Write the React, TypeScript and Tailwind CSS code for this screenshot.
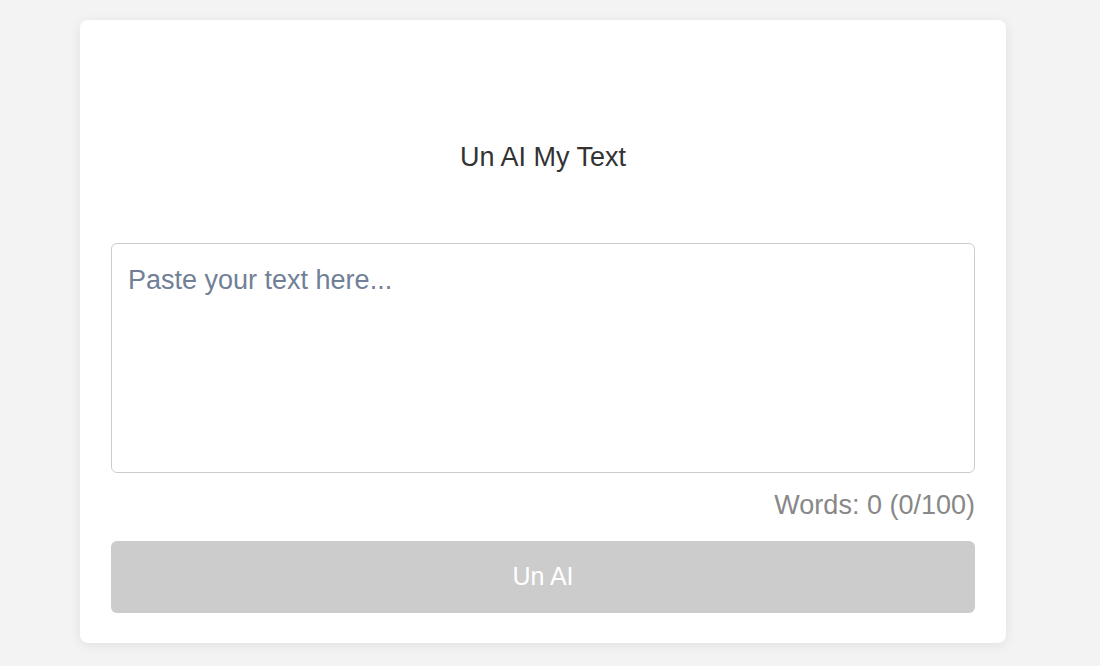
import React, { useState } from 'react';

const App: React.FC = () => {
  const [text, setText] = useState('');
  const words = text.trim() ? text.trim().split(/\s+/).length : 0;

  return (
    <div className="min-h-[666px] w-full bg-[#f3f3f3] pt-[20px] font-['Liberation_Sans',Arial,sans-serif]">
      <div className="ml-[80px] w-[926px] rounded-[8px] bg-white px-[31px] pt-[30px] pb-[30px] shadow-[0_2px_12px_rgba(0,0,0,0.08)]">
        <h1 className="mt-[92px] mb-[71px] text-center text-[27px] leading-[30px] font-normal text-[#333333]">
          Un AI My Text
        </h1>
        <textarea
          value={text}
          onChange={(e) => setText(e.target.value)}
          placeholder="Paste your text here..."
          className="block h-[230px] w-full resize-none rounded-[6px] border border-[#cccccc] px-[16px] pt-[21px] text-[27px] leading-[30px] text-[#333333] outline-none placeholder:text-[#718096]"
        />
        <div className="mt-[17px] text-right text-[27px] leading-[30px] text-[#888888]">
          Words: {words} ({words}/100)
        </div>
        <button
          disabled={words === 0}
          className="mt-[21px] block h-[72px] w-full rounded-[6px] bg-[#cccccc] text-[25px] text-white"
        >
          Un AI
        </button>
      </div>
    </div>
  );
};

export default App;
